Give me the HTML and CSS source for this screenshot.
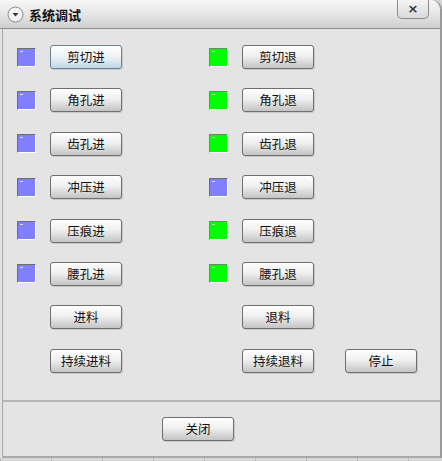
FILE: index.html
```html
<!DOCTYPE html>
<html lang="zh">
<head>
<meta charset="utf-8">
<title>系统调试</title>
<link rel="stylesheet" href="styles.css">
</head>
<body>
<div class="window">
  <div class="titlebar">
    <span class="menu-icon">
      <svg width="17" height="17" viewBox="0 0 17 17"><circle cx="8.5" cy="8.5" r="7.5" fill="#f4f4f4" stroke="#8a8a8a" stroke-width="1"/><path d="M5.5 7 L11.5 7 L8.5 10.5 Z" fill="#333"/></svg>
    </span>
    <span class="title">系统调试</span>
    <span class="close">×</span>
  </div>
  <div class="panel">
    <div class="row">
      <span class="led blue"></span><button class="btn focus">剪切进</button>
      <span class="led green second"></span><button class="btn">剪切退</button>
    </div>
    <div class="row">
      <span class="led blue"></span><button class="btn">角孔进</button>
      <span class="led green second"></span><button class="btn">角孔退</button>
    </div>
    <div class="row">
      <span class="led blue"></span><button class="btn">齿孔进</button>
      <span class="led green second"></span><button class="btn">齿孔退</button>
    </div>
    <div class="row">
      <span class="led blue"></span><button class="btn">冲压进</button>
      <span class="led blue second"></span><button class="btn">冲压退</button>
    </div>
    <div class="row">
      <span class="led blue"></span><button class="btn">压痕进</button>
      <span class="led green second"></span><button class="btn">压痕退</button>
    </div>
    <div class="row">
      <span class="led blue"></span><button class="btn">腰孔进</button>
      <span class="led green second"></span><button class="btn">腰孔退</button>
    </div>
    <div class="row">
      <span class="led none"></span><button class="btn">进料</button>
      <span class="led none second"></span><button class="btn">退料</button>
    </div>
    <div class="row">
      <span class="led none"></span><button class="btn">持续进料</button>
      <span class="led none second"></span><button class="btn">持续退料</button>
      <button class="btn stop">停止</button>
    </div>
  </div>
  <div class="footer">
    <button class="btn close-btn">关闭</button>
  </div>
</div>
<div class="under"></div>
</body>
</html>
```

FILE: styles.css
```css
* { box-sizing: border-box; }
html, body { margin: 0; padding: 0; }
body {
  width: 442px;
  height: 461px;
  background: #d4d4d4;
  font-family: "Noto Sans CJK SC", "Noto Sans", sans-serif;
  overflow: hidden;
}
.window {
  width: 442px;
  height: 458px;
  background: #e4e4e4;
  border-right: 2px solid #9a9a9a;
  border-top-right-radius: 10px;
  display: flex;
  flex-direction: column;
}
.titlebar {
  height: 29px;
  flex: none;
  display: flex;
  align-items: center;
  padding-left: 7px;
  background: linear-gradient(#f7f7f7, #e6e6e6 50%, #cfcfcf);
  border-bottom: 1px solid #8c8c8c;
  border-top-right-radius: 10px;
  position: relative;
}
.menu-icon { width: 17px; height: 17px; display: block; }
.menu-icon svg { display: block; }
.title {
  margin-left: 5px;
  font-size: 13px;
  font-weight: bold;
  color: #111;
}
.close {
  position: absolute;
  left: 397px;
  top: 0;
  width: 32px;
  height: 19px;
  border: 1px solid #8a8a8a;
  border-top: none;
  border-radius: 0 0 5px 5px;
  background: linear-gradient(#f4f4f4, #dadada);
  font-family: "DejaVu Sans", sans-serif;
  font-size: 13px;
  line-height: 17px;
  text-align: center;
  font-weight: bold;
  color: #333;
}
.panel {
  margin-left: 2px;
  border-left: 1px solid #aaaaaa;
  padding: 16px 0 27px 14px;
  display: flex;
  flex-direction: column;
  gap: 19.4px;
  border-bottom: 2px solid #b4b4b4;
}
.row {
  display: flex;
  align-items: center;
  height: 24px;
}
.led {
  width: 19px;
  height: 19px;
  flex: none;
  margin-right: 14px;
  border: 1px solid;
  border-color: #6e6e6e #ffffff #ffffff #6e6e6e;
  position: relative;
}
.led::before {
  content: "";
  position: absolute;
  left: 2px;
  top: 2px;
  width: 3px;
  height: 1px;
  background: rgba(255,255,255,0.8);
}
.led.blue { background: #8080ff; }
.led.green { background: #00ff00; border-color: #6a8a6a #ffffff #ffffff #6a8a6a; }
.led.none { border-color: transparent; background: transparent; }
.led.none::before { display: none; }
.led.second { margin-left: 87px; margin-right: 14px; }
.btn {
  width: 72px;
  height: 24px;
  flex: none;
  padding: 0;
  border: 1px solid #6f6f6f;
  border-radius: 3px;
  background: linear-gradient(#fefefe, #f0f0f0 45%, #dcdcdc 70%, #c4c4c4);
  box-shadow: 1px 1px 0 rgba(0,0,0,0.12);
  font-family: "Noto Sans CJK SC", "Noto Sans", sans-serif;
  font-size: 12.5px;
  line-height: 22px;
  color: #111;
}
.btn.focus {
  border-color: #6c8397;
  background: linear-gradient(#fefefe, #f3f5f7 40%, #dce8ef 70%, #bcd8e8);
}
.btn.stop { margin-left: 31px; }
.footer {
  margin-left: 2px;
  flex: 1;
  border-left: 1px solid #aaaaaa;
  border-bottom: 2px solid #a8a8a8;
  padding: 13px 0 0 159px;
}
.under {
  height: 3px;
  background: repeating-linear-gradient(90deg, #bdbdbd 0 1px, #d8d8d8 1px 51px);
}
```
